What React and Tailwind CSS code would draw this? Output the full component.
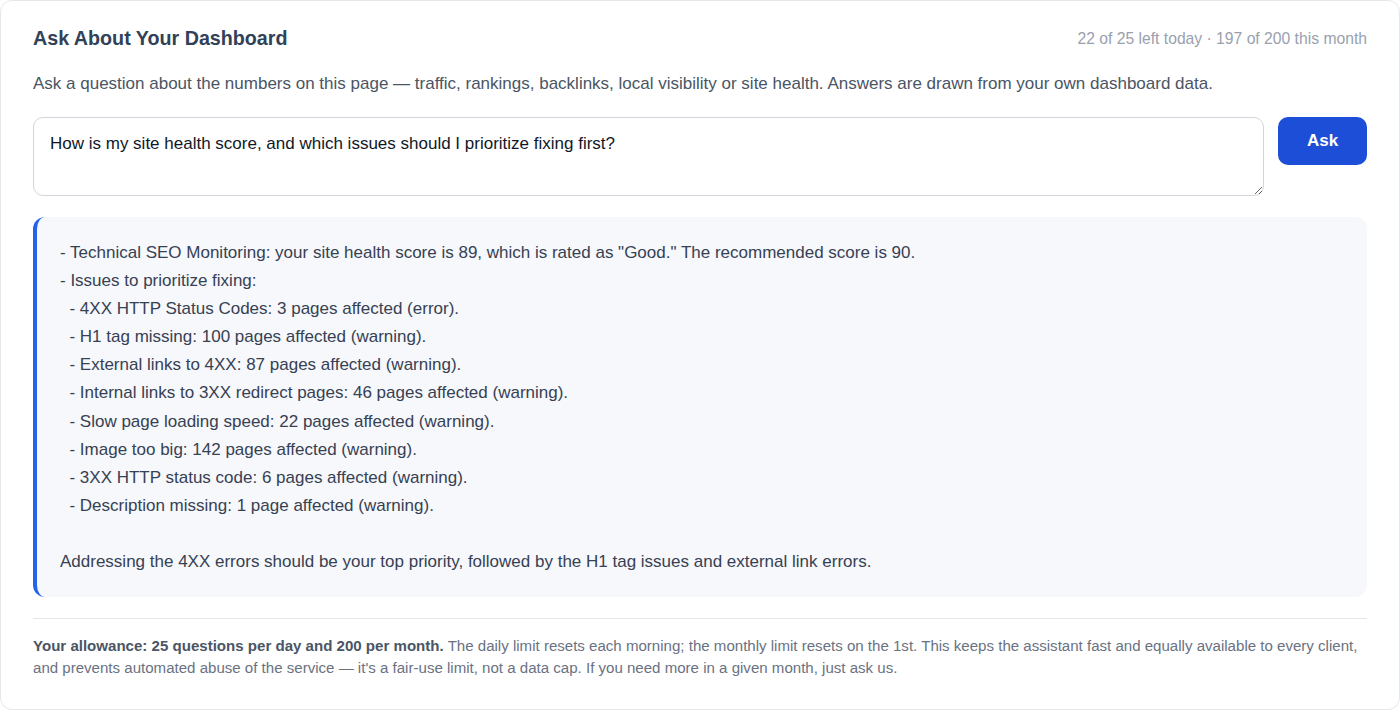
import React from "react";

const answer = `- Technical SEO Monitoring: your site health score is 89, which is rated as "Good." The recommended score is 90.
- Issues to prioritize fixing:
  - 4XX HTTP Status Codes: 3 pages affected (error).
  - H1 tag missing: 100 pages affected (warning).
  - External links to 4XX: 87 pages affected (warning).
  - Internal links to 3XX redirect pages: 46 pages affected (warning).
  - Slow page loading speed: 22 pages affected (warning).
  - Image too big: 142 pages affected (warning).
  - 3XX HTTP status code: 6 pages affected (warning).
  - Description missing: 1 page affected (warning).

Addressing the 4XX errors should be your top priority, followed by the H1 tag issues and external link errors.`;

export default function App() {
  return (
    <div className="min-h-screen bg-white font-['Liberation_Sans',Arial,sans-serif]">
      <div className="h-[710px] rounded-xl border border-gray-200 bg-white px-8 pt-6 pb-8">
        <div className="flex items-center justify-between h-7">
          <h2 className="text-[19.7px] font-bold text-slate-700">Ask About Your Dashboard</h2>
          <span className="text-[15.7px] text-gray-400">22 of 25 left today · 197 of 200 this month</span>
        </div>

        <p className="mt-[18px] text-[17px] leading-[26px] text-gray-600">
          Ask a question about the numbers on this page — traffic, rankings, backlinks, local visibility or site health. Answers are drawn from your own dashboard data.
        </p>

        <div className="mt-[20px] flex gap-[14px] items-start">
          <textarea
            className="flex-1 h-[79px] rounded-[10px] border border-gray-300 px-4 py-[14px] text-[17px] leading-6 text-gray-900 outline-none"
            defaultValue="How is my site health score, and which issues should I prioritize fixing first?"
          />
          <button className="w-[89px] h-12 rounded-[10px] bg-[#1d4ed8] text-[17px] font-bold text-white">
            Ask
          </button>
        </div>

        <div className="mt-[21px] rounded-xl border-l-4 border-[#2563eb] bg-[#f6f8fb] pl-[23px] pr-6 pt-[22px] pb-[21px] text-[17px] leading-[28.1px] text-gray-700 whitespace-pre-wrap">
          {answer}
        </div>

        <div className="mt-[21px] border-t border-gray-200 pt-4 text-[15.07px] leading-[22px] text-gray-500">
          <span className="font-bold text-gray-600">Your allowance: 25 questions per day and 200 per month.</span>{" "}
          The daily limit resets each morning; the monthly limit resets on the 1st. This keeps the assistant fast and equally available to every client, and prevents automated abuse of the service — it's a fair-use limit, not a data cap. If you need more in a given month, just ask us.
        </div>
      </div>
    </div>
  );
}
